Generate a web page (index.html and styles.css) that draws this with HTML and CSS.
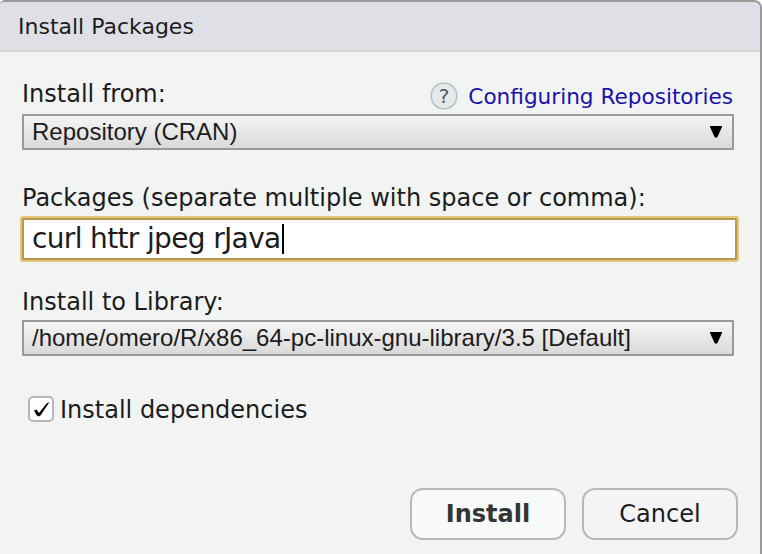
FILE: index.html
```
<!DOCTYPE html>
<html lang="en">
<head>
<meta charset="utf-8">
<title>Install Packages</title>
<link rel="stylesheet" href="styles.css">
</head>
<body>
<main class="dialog">
  <header class="title"><span>Install Packages</span></header>
  <form class="content">
    <div class="heading">
      <span class="label from">Install from:</span>
      <a class="help"><svg width="28" height="28" viewBox="0 0 28 28"><circle cx="14" cy="14" r="12.8"/><text x="14" y="20.5" text-anchor="middle">?</text></svg><span>Configuring Repositories</span></a>
    </div>
    <div class="select"><span class="repo">Repository (CRAN)</span><svg width="12" height="12" viewBox="0 0 12 12"><path d="M0 0H12V1L7.2 11.5H4.8L0 1Z"/></svg></div>
    <div class="label packages">Packages (separate multiple with space or comma):</div>
    <div class="input"><span>curl httr jpeg rJava</span><i class="caret"></i></div>
    <div class="label library">Install to Library:</div>
    <div class="select"><span class="path">/home/omero/R/x86_64-pc-linux-gnu-library/3.5 [Default]</span><svg width="12" height="12" viewBox="0 0 12 12"><path d="M0 0H12V1L7.2 11.5H4.8L0 1Z"/></svg></div>
    <div class="check"><span class="box"><svg width="22" height="22" viewBox="0 0 22 22"><path d="M4 12.5L6.5 11.5L9 15L16.5 5.5L19.5 4L10.5 17.5L8.5 18.5L6.5 17Z"/></svg></span><span class="label deps">Install dependencies</span></div>
    <div class="actions"><div class="button primary"><span>Install</span></div><div class="button"><span>Cancel</span></div></div>
  </form>
</main>
</body>
</html>
```
FILE: styles.css
```
* { box-sizing: border-box; }
html, body { margin: 0; height: 554px; overflow: hidden; background: #fff; }
body { font-family: "DejaVu Sans", sans-serif; color: #1c1c1c; }
span { white-space: nowrap; }
svg { display: block; flex: none; }
.dialog { height: 554px; background: #f2f4f3; border-top: 2px solid #9a9c9a; border-right: 2px solid #9a9c9a; border-radius: 5px 8px 0 0; overflow: hidden; }
.title { height: 50px; padding: 0 18px; background: #dfe0e5; border-bottom: 2px solid #d4d6d8; font-size: 22px; line-height: 50px; }
.content { padding: 26px 0 0 22px; }
.heading { display: flex; justify-content: space-between; width: 711px; height: 36px; }
.label { font-size: 24px; line-height: 32px; white-space: nowrap; }
.help { display: flex; gap: 10px; padding-top: 4px; color: #1b10ab; font-size: 21.6px; line-height: 30px; }
.help circle { fill: #e5e9eb; stroke: #bbc4c9; stroke-width: 1.8; }
.help text { font-size: 20px; fill: #4e585f; }
.select { display: flex; align-items: center; justify-content: space-between; width: 712px; height: 36px; padding: 0 10px 0 8px; border: 2px solid #999; border-radius: 1px; background: linear-gradient(#f5f5f5, #d9d9d9); font: 24px/32px "Liberation Sans", sans-serif; }
.packages { margin-top: 32px; }
.input { display: flex; align-items: center; width: 719px; height: 46px; margin: 2px 0 0 -2px; padding-left: 8px; border: 2px solid #e3c679; outline: 2px solid #b6984e; outline-offset: -4px; border-radius: 3px; background: #fff; font-size: 28px; line-height: 38px; letter-spacing: -.65px; }
.input span { padding-left: 2px; }
.caret { width: 2px; height: 30px; margin-left: 1px; background: #000; }
.library { margin: 24px 0 2px; }
.check { display: flex; align-items: center; gap: 6px; height: 30px; margin: 38px 0 0 6px; }
.deps { padding-top: 2px; }
.box { width: 26px; height: 26px; border: 2px solid #b7b7b7; border-radius: 5px; background: #fff; }
.actions { display: flex; gap: 16px; margin: 64px 0 0 388px; }
.button { display: flex; align-items: center; justify-content: center; width: 156px; height: 52px; border: 2px solid #b7b7b7; border-radius: 13px; background: #f4f4f6; font-size: 24px; }
.primary { background: #f8faf9; color: #343635; font-weight: bold; }
```
